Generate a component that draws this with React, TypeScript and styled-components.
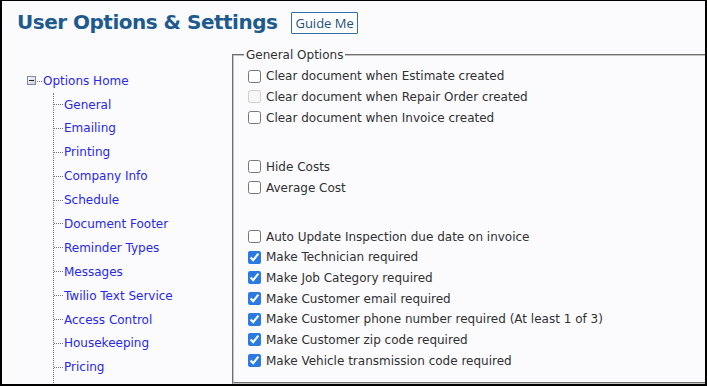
import styled, { createGlobalStyle } from "styled-components";

const GlobalStyle = createGlobalStyle`
  html, body {
    margin: 0;
    padding: 0;
    background: #fbfbfe;
  }
`;

const Frame = styled.div`
  width: 707px;
  height: 386px;
  box-sizing: border-box;
  border: 2px solid #000;
  border-top-width: 1px;
  background: #fbfbfe;
  overflow: hidden;
  font-family: "DejaVu Sans", Verdana, sans-serif;
  font-size: 12px;
  color: #303030;
  display: flex;
  flex-direction: column;
`;

const Header = styled.div`
  height: 47px;
  box-sizing: border-box;
  padding: 9px 0 0 15px;
  display: flex;
  align-items: flex-start;
  gap: 14px;
  flex-shrink: 0;
`;

const Title = styled.h1`
  margin: 0;
  font-size: 20px;
  line-height: 24px;
  font-weight: bold;
  letter-spacing: -0.5px;
  color: #1d5a8e;
`;

const GuideButton = styled.button`
  margin-top: 2px;
  height: 22px;
  box-sizing: border-box;
  padding: 0 3px;
  border: 1px solid #2f6ea8;
  border-radius: 1px;
  background: #fff;
  color: #1d4e80;
  font-family: "Open Sans", "Noto Sans", sans-serif;
  font-size: 13px;
  line-height: 20px;
  cursor: pointer;
`;

const Body = styled.div`
  flex: 1;
  display: flex;
  min-height: 0;
`;

const Nav = styled.div`
  width: 230px;
  flex-shrink: 0;
  padding-top: 20.8px;
  box-sizing: border-box;
`;

const TreeRoot = styled.div`
  height: 23.8px;
  display: flex;
  align-items: center;
  padding-left: 25px;
`;

const RootConnector = styled.span`
  width: 5px;
  margin: 1px 1px 0 1px;
  border-top: 1px dotted #777;
`;

const TreeLink = styled.a`
  color: #2727ee;
  text-decoration: none;
  white-space: nowrap;
  cursor: pointer;
`;

const TreeChildren = styled.div`
  margin-left: 51px;
  border-left: 1px dotted #777;
  padding-bottom: 40px;
`;

const TreeItem = styled.div`
  height: 23.9px;
  display: flex;
  align-items: center;

  &::before {
    content: "";
    width: 9px;
    margin-right: 1px;
    border-top: 1px dotted #777;
  }
`;

const OptionsFieldset = styled.fieldset`
  flex: 1;
  margin: 0 -20px 0 0;
  padding: 4px 0 0 14px;
  border: 2px groove #c4c4c4;
  min-width: 0;
`;

const Legend = styled.legend`
  padding: 0 2px;
  margin-left: -4px;
  line-height: 14px;
  color: #303030;
`;

const OptionRow = styled.label`
  height: 20.67px;
  display: flex;
  align-items: center;
  white-space: nowrap;
`;

const Check = styled.input.attrs({ type: "checkbox" })`
  width: 13px;
  height: 13px;
  margin: 0 5px 0 0;
  flex-shrink: 0;
  accent-color: #2a7ae2;
`;

const Spacer = styled.div<{ $h: number }>`
  height: ${(p) => p.$h}px;
`;

function ExpandIcon() {
  return (
    <svg width="9" height="9" viewBox="0 0 9 9">
      <defs>
        <linearGradient id="exp" x1="0" y1="0" x2="1" y2="1">
          <stop offset="0" stopColor="#ffffff" />
          <stop offset="1" stopColor="#c6cad6" />
        </linearGradient>
      </defs>
      <rect x="0.5" y="0.5" width="8" height="8" fill="url(#exp)" stroke="#7f8aa0" />
      <rect x="2" y="4" width="5" height="1" fill="#222" />
    </svg>
  );
}

const TREE = [
  "General",
  "Emailing",
  "Printing",
  "Company Info",
  "Schedule",
  "Document Footer",
  "Reminder Types",
  "Messages",
  "Twilio Text Service",
  "Access Control",
  "Housekeeping",
  "Pricing",
];

type Opt = { label: string; checked?: boolean; disabled?: boolean } | { gap: number };

const OPTIONS: Opt[] = [
  { label: "Clear document when Estimate created" },
  { label: "Clear document when Repair Order created", disabled: true },
  { label: "Clear document when Invoice created" },
  { gap: 28.7 },
  { label: "Hide Costs" },
  { label: "Average Cost" },
  { gap: 28.3 },
  { label: "Auto Update Inspection due date on invoice" },
  { label: "Make Technician required", checked: true },
  { label: "Make Job Category required", checked: true },
  { label: "Make Customer email required", checked: true },
  { label: "Make Customer phone number required (At least 1 of 3)", checked: true },
  { label: "Make Customer zip code required", checked: true },
  { label: "Make Vehicle transmission code required", checked: true },
];

export default function App() {
  return (
    <>
      <GlobalStyle />
      <Frame>
        <Header>
          <Title>User Options &amp; Settings</Title>
          <GuideButton>Guide Me</GuideButton>
        </Header>
        <Body>
          <Nav>
            <TreeRoot>
              <ExpandIcon />
              <RootConnector />
              <TreeLink>Options Home</TreeLink>
            </TreeRoot>
            <TreeChildren>
              {TREE.map((t) => (
                <TreeItem key={t}>
                  <TreeLink>{t}</TreeLink>
                </TreeItem>
              ))}
            </TreeChildren>
          </Nav>
          <OptionsFieldset>
            <Legend>General Options</Legend>
            {OPTIONS.map((o, i) =>
              "gap" in o ? (
                <Spacer key={i} $h={o.gap} />
              ) : (
                <OptionRow key={i}>
                  <Check defaultChecked={o.checked} disabled={o.disabled} />
                  {o.label}
                </OptionRow>
              )
            )}
          </OptionsFieldset>
        </Body>
      </Frame>
    </>
  );
}
